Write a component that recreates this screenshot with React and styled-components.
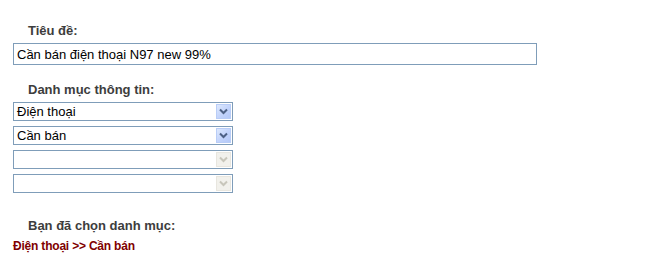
import React from 'react';
import styled, { createGlobalStyle } from 'styled-components';

const GlobalStyle = createGlobalStyle`
    body {
        margin: 0;
        background: #ffffff;
        font-family: "Liberation Sans", Arial, sans-serif;
    }
`;

const Chevron = ({ color }) => (
    <svg width="9" height="7" viewBox="0 0 9 7">
        <path d="M1 1.5 L4.5 5 L8 1.5" fill="none" stroke={color} strokeWidth="2" />
    </svg>
);

const Dropdown = ({ value, disabled }) => {
    return (
        <SelectBox>
            <SelectValue>{value}</SelectValue>
            <ArrowButton disabled={disabled}>
                <Chevron color={disabled ? '#c8c6bb' : '#4d6185'} />
            </ArrowButton>
        </SelectBox>
    );
};

const App = () => {
    return (
        <>
            <GlobalStyle />
            <Form>
                <Label>Tiêu đề:</Label>
                <TextInput readOnly value="Cần bán điện thoại N97 new 99%" />

                <Label $top={18}>Danh mục thông tin:</Label>
                <SelectList>
                    <Dropdown value="Điện thoại" />
                    <Dropdown value="Cần bán" />
                    <Dropdown value="" disabled />
                    <Dropdown value="" disabled />
                </SelectList>

                <Label $top={26}>Bạn đã chọn danh mục:</Label>
                <Result>Điện thoại &gt;&gt; Cần bán</Result>
            </Form>
        </>
    );
};

export default App;

const Form = styled.div`
    display: flex;
    flex-direction: column;
    align-items: flex-start;
    padding: 24px 0 0 13px;
`;

const Label = styled.div`
    margin-top: ${(p) => p.$top || 0}px;
    padding-left: 15px;
    font-family: "Liberation Sans", Arial, sans-serif;
    font-size: 13px;
    line-height: 14px;
    font-weight: bold;
    color: #3d3d3d;
    margin-bottom: 5px;
`;

const TextInput = styled.input`
    box-sizing: border-box;
    width: 524px;
    height: 22px;
    margin: 0;
    padding: 0 3px;
    border: 1px solid #7f9db9;
    font-family: "Liberation Sans", Arial, sans-serif;
    font-size: 13px;
    color: #000;
    outline: none;
`;

const SelectList = styled.div`
    display: flex;
    flex-direction: column;
    gap: 5px;
`;

const SelectBox = styled.div`
    box-sizing: border-box;
    width: 220px;
    height: 19px;
    border: 1px solid #7f9db9;
    display: flex;
    align-items: center;
    justify-content: space-between;
    padding: 0 1px 0 3px;
`;

const SelectValue = styled.span`
    font-size: 13px;
    color: #000;
    line-height: 17px;
`;

const ArrowButton = styled.span`
    box-sizing: border-box;
    width: 15px;
    height: 15px;
    display: flex;
    align-items: center;
    justify-content: center;
    border: 1px solid ${(p) => (p.disabled ? '#e8e6df' : '#b9cdf7')};
    background: ${(p) =>
        p.disabled ? '#f2f1ec' : 'linear-gradient(135deg, #dde8fd 0%, #c0d2fb 60%, #b5c9f8 100%)'};
`;

const Result = styled.div`
    margin-top: 1px;
    font-size: 12px;
    letter-spacing: -0.2px;
    line-height: 14px;
    font-weight: bold;
    color: #800000;
`;
